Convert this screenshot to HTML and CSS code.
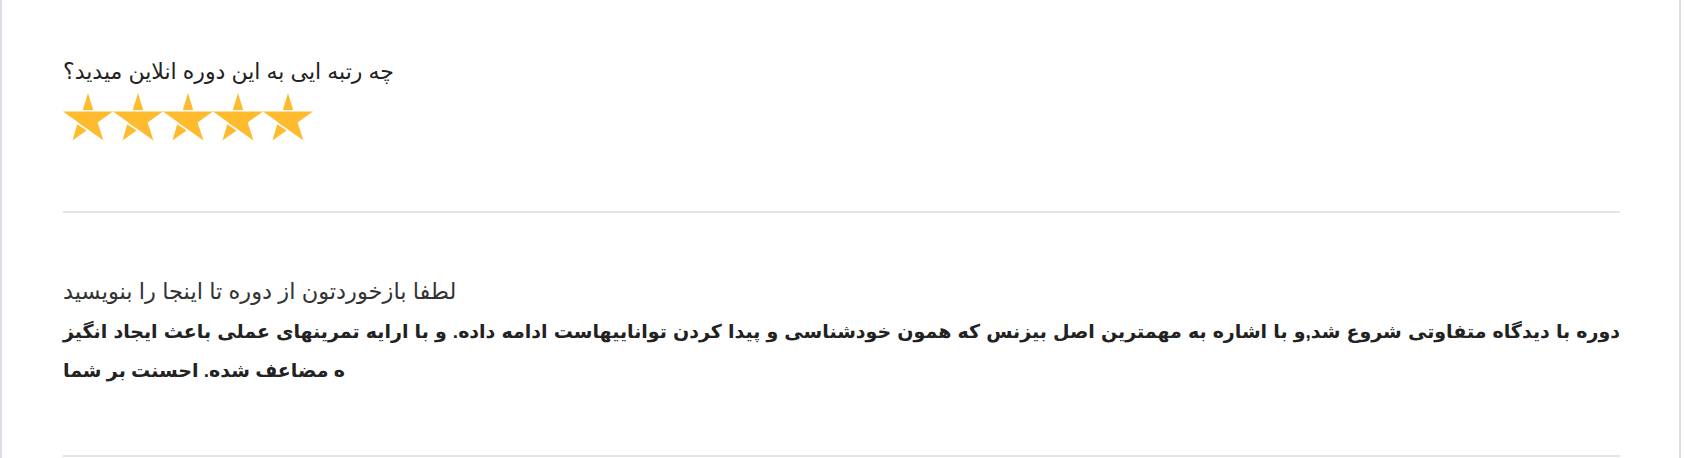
FILE: index.html
```html
<!DOCTYPE html>
<html lang="fa">
<head>
<meta charset="utf-8">
<title>بازخورد دوره</title>
<link rel="stylesheet" href="styles.css">
</head>
<body>
<div class="panel">
  <section class="field rating">
    <p class="question" dir="rtl">چه رتبه ایی به این دوره انلاین میدید؟</p>
    <div class="stars" aria-label="5 stars">
      <svg class="star" viewBox="0 0 50 48" width="50" height="48"><path d="M25 0 L30.2 17 L19.8 17 Z"/><path d="M0 18.6 L50 18.6 L34.6 29.6 L40.5 47.6 L25 36.5 L15.8 30.2 L15.4 29.4 Z"/><path d="M14.2 31.2 L23.6 37.6 L9.5 47.6 Z"/></svg>
      <svg class="star" viewBox="0 0 50 48" width="50" height="48"><path d="M25 0 L30.2 17 L19.8 17 Z"/><path d="M0 18.6 L50 18.6 L34.6 29.6 L40.5 47.6 L25 36.5 L15.8 30.2 L15.4 29.4 Z"/><path d="M14.2 31.2 L23.6 37.6 L9.5 47.6 Z"/></svg>
      <svg class="star" viewBox="0 0 50 48" width="50" height="48"><path d="M25 0 L30.2 17 L19.8 17 Z"/><path d="M0 18.6 L50 18.6 L34.6 29.6 L40.5 47.6 L25 36.5 L15.8 30.2 L15.4 29.4 Z"/><path d="M14.2 31.2 L23.6 37.6 L9.5 47.6 Z"/></svg>
      <svg class="star" viewBox="0 0 50 48" width="50" height="48"><path d="M25 0 L30.2 17 L19.8 17 Z"/><path d="M0 18.6 L50 18.6 L34.6 29.6 L40.5 47.6 L25 36.5 L15.8 30.2 L15.4 29.4 Z"/><path d="M14.2 31.2 L23.6 37.6 L9.5 47.6 Z"/></svg>
      <svg class="star" viewBox="0 0 50 48" width="50" height="48"><path d="M25 0 L30.2 17 L19.8 17 Z"/><path d="M0 18.6 L50 18.6 L34.6 29.6 L40.5 47.6 L25 36.5 L15.8 30.2 L15.4 29.4 Z"/><path d="M14.2 31.2 L23.6 37.6 L9.5 47.6 Z"/></svg>
    </div>
  </section>
  <hr class="sep sep-first">
  <section class="field feedback">
    <p class="label" dir="rtl">لطفا بازخوردتون از دوره تا اینجا را بنویسید</p>
    <div class="answer" dir="rtl">
      <p class="answer-line answer-full">دوره با دیدگاه متفاوتی شروع شد,و با اشاره به مهمترین اصل بیزنس که همون خودشناسی و پیدا کردن تواناییهاست ادامه داده. و با ارایه تمرینهای عملی باعث ایجاد انگیز</p>
      <p class="answer-line answer-last">ه مضاعف شده. احسنت بر شما</p>
    </div>
  </section>
  <hr class="sep sep-last">
</div>
</body>
</html>
```
FILE: styles.css
```css
html, body {
  margin: 0;
  padding: 0;
  background: #ffffff;
}

body {
  font-family: Arial, "Liberation Sans", "DejaVu Sans", sans-serif;
  color: #222222;
}

.panel {
  box-sizing: border-box;
  width: 1681px;
  height: 458px;
  border-left: 2px solid #d9dde6;
  border-right: 2px solid #d9dde6;
  padding: 59px 59px 0 61px;
  overflow: hidden;
}

.field {
  display: flex;
  flex-direction: column;
  align-items: flex-start;
}

.question {
  margin: 0;
  font-size: 22px;
  line-height: 26px;
  text-align: left;
  color: #222222;
}

.stars {
  display: flex;
  margin-top: 8px;
}

.star {
  display: block;
  fill: #fdbb2d;
}

.sep {
  border: 0;
  height: 2px;
  background: #e4e4e4;
  margin: 0;
}

.sep-first {
  margin-top: 70px;
}

.feedback {
  margin-top: 66px;
  align-items: stretch;
}

.label {
  margin: 0;
  font-size: 22.5px;
  line-height: 26px;
  text-align: left;
  color: #333333;
}

.answer {
  margin-top: 7px;
}

.answer-line {
  margin: 0;
  font-size: 19px;
  font-weight: bold;
  line-height: 39px;
  color: #222222;
  white-space: nowrap;
}

.answer-full {
  text-align: justify;
  text-align-last: justify;
}

.answer-last {
  text-align: left;
}

.sep-last {
  margin-top: 65px;
}
```
